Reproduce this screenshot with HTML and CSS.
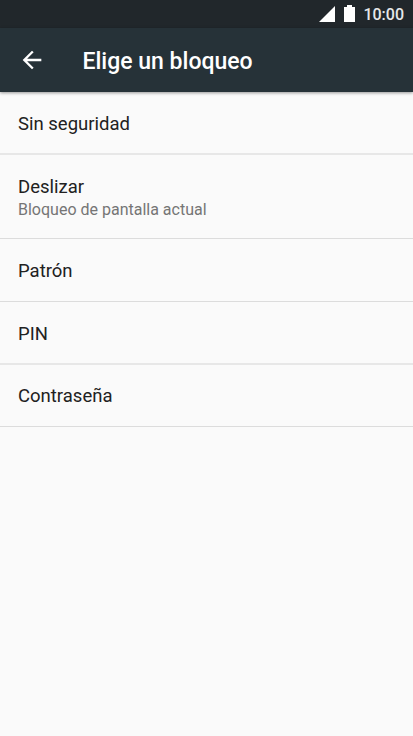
FILE: index.html
```html
<!DOCTYPE html>
<html lang="es">
<head>
<meta charset="utf-8">
<title>Elige un bloqueo</title>
<link rel="stylesheet" href="styles.css">
</head>
<body>
<div class="status">
  <svg class="signal" viewBox="0 0 16 16"><path d="M16 0v16H0z"/></svg>
  <svg class="battery" viewBox="0 0 11 17"><path d="M3 0h5v2h3v15H0V2h3z"/></svg>
  <span class="clock">10:00</span>
</div>
<header class="toolbar">
  <svg class="back" viewBox="0 0 24 24"><path d="M20 11H7.83l5.59-5.59L12 4l-8 8 8 8 1.41-1.41L7.83 13H20v-2z"/></svg>
  <h1 class="title">Elige un bloqueo</h1>
</header>
<ul class="list">
  <li class="item soft"><span class="name">Sin seguridad</span></li>
  <li class="item tall"><span class="name">Deslizar</span><span class="note">Bloqueo de pantalla actual</span></li>
  <li class="item"><span class="name">Patrón</span></li>
  <li class="item soft"><span class="name">PIN</span></li>
  <li class="item last"><span class="name">Contraseña</span></li>
</ul>
</body>
</html>
```
FILE: styles.css
```css
* { box-sizing: border-box; }
body { margin: 0; height: 736px; overflow: hidden; background: #fafafa; font-family: Roboto, sans-serif; color: #212121; }
.status { height: 28px; display: flex; justify-content: flex-end; align-items: center; padding-right: 9px; background: #21272b; color: #e6e8e9; }
.status svg { fill: #fff; }
.signal { width: 16px; height: 16px; margin-right: 9.5px; }
.battery { width: 11px; height: 17px; margin: -1px 8px 0 0; }
.clock { font-size: 16px; font-weight: 500; line-height: 28px; padding-top: 2px; }
.toolbar { height: 64px; display: flex; align-items: center; padding-left: 18px; background: #263238; box-shadow: 0 1px 3px rgba(0,0,0,.4); }
.back { width: 28px; height: 28px; fill: #fff; }
.title { margin: 2px 0 0 36.5px; font-size: 23px; font-weight: 500; color: #fff; }
.list { list-style: none; margin: 0; padding: 0; }
.item { height: 63px; padding: 20px 0 0 18px; border-bottom: 1px solid #dcdcdc; }
.soft { border-bottom: 2px solid #e7e7e7; }
.tall { height: 84px; }
.last { height: 62px; padding-top: 19px; }
.name, .note { display: block; }
.name { font-size: 18.5px; line-height: 24px; }
.note { font-size: 16px; line-height: 22px; color: #757575; }
```
